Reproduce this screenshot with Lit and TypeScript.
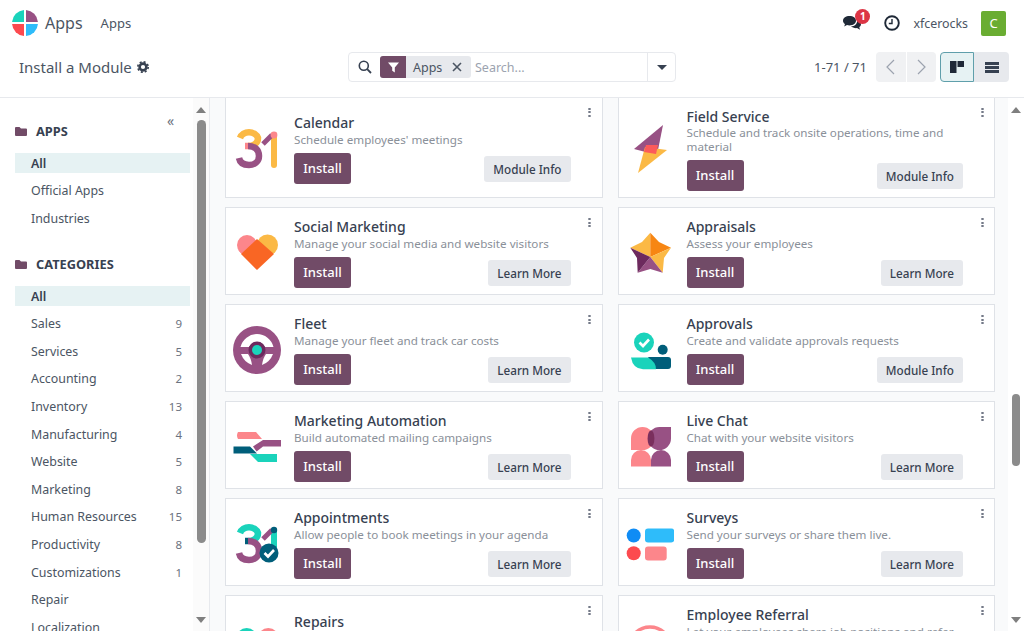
import { LitElement, html, css, svg } from 'lit';
import { customElement } from 'lit/decorators.js';

const PURPLE = "#985184", TEAL = "#1ad3bb", NAVY = "#005e7a", PINK = "#fc868b", AMBER = "#fbb945";

const icons: Record<string, unknown> = {
  calendar: svg`
    <path d="M7 13 A9.5 8.5 0 0 1 25 13 C25 18 21 21 15 21" fill="none" stroke=${AMBER} stroke-width="6.5"/>
    <path d="M15 21 C22 21 26 25 26 31 C26 37 21 40 16 40 C11 40 7 38 6 33" fill="none" stroke=${PURPLE} stroke-width="6.5"/>
    <path d="M15 21 H12" stroke=${PINK} stroke-width="6.5"/>
    <path d="M41 10 V40" stroke=${AMBER} stroke-width="6" stroke-linecap="round"/>
    <path d="M30 19 L39 10" stroke=${PURPLE} stroke-width="5"/>
    <circle cx="41" cy="10" r="3.4" fill=${PINK}/>`,
  service: svg`
    <path d="M37 0 L8 24 L31 30Z" fill=${PURPLE}/>
    <path d="M41 25 L12 48 L19 22Z" fill=${AMBER}/>
    <path d="M20 20 L32 20 L30 29 L18 27Z" fill="#fc5a5a"/>`,
  social: svg`
    <circle cx="14" cy="16" r="10" fill=${PINK}/>
    <circle cx="34.5" cy="16" r="10.5" fill=${AMBER}/>
    <path d="M5 21 L24 41 L15 25Z" fill=${PINK}/>
    <path d="M24 10 L41 25 L24 41 L8 25Z" fill="#f96624"/>`,
  appraisals: svg`
    <path d="M24.3 3.7 L16 13 L4.3 18.7 L24.3 28Z" fill=${AMBER}/>
    <path d="M24.3 3.7 L33 13 L45 18.7 L24.3 28Z" fill="#f78613"/>
    <path d="M45 18.7 L38 29 L36.7 43.7 L24.3 28Z" fill=${AMBER}/>
    <path d="M36.7 43.7 L24.3 40 L11.7 43.7 L24.3 28Z" fill=${PURPLE}/>
    <path d="M11.7 43.7 L11 29 L4.3 18.7 L24.3 28Z" fill="#6d2a5e"/>`,
  fleet: svg`
    <circle cx="24" cy="24" r="24" fill=${PURPLE}/>
    <path d="M7.5 21 A17 17 0 0 1 40.5 21 L32 21 A9 9 0 0 0 16 21Z" fill="#fff"/>
    <path d="M8 28 L15 28 Q18 32 19 39 Q11 36 8 28Z" fill="#fff"/>
    <path d="M40 28 L33 28 Q30 32 29 39 Q37 36 40 28Z" fill="#fff"/>
    <circle cx="24" cy="24" r="8.5" fill="#6d2a5e"/>
    <circle cx="24" cy="24" r="5" fill=${TEAL}/>`,
  approvals: svg`
    <circle cx="18" cy="16.5" r="10" fill=${TEAL}/>
    <path d="M13.5 16.5 L17 20 L23 13.5" fill="none" stroke="#fff" stroke-width="2.6"/>
    <circle cx="36.7" cy="23.8" r="5" fill=${NAVY}/>
    <path d="M22 31 H42 A3 3 0 0 1 45 34 V40 A3 3 0 0 1 42 43 H28Z" fill=${NAVY}/>
    <path d="M5 31.5 H22 Q30 36 30 43.2 H17 Q7 43 5 31.5Z" fill=${TEAL}/>`,
  automation: svg`
    <path d="M5 9 H23 L29 16 H5 Q3 12.500 5 9Z" fill=${PINK}/>
    <path d="M48.700 17 H30 L20 23.500 L23.600 28.500 L30 23.500 H48.700Z" fill=${PURPLE}/>
    <path d="M.5 23.500 H17 L24 30.500 H.5Z" fill=${NAVY}/>
    <path d="M17 31 H44 V39 H25Z" fill=${TEAL}/>`,
  chat: svg`
    <path d="M5 27 V15.500 A11.500 11.500 0 1 1 16.500 27Z" fill=${PINK}/>
    <path d="M45 4 V15.500 A11.500 11.500 0 0 1 33.500 27 A11.500 11.500 0 0 1 33.500 4Z" fill=${PURPLE}/>
    <ellipse cx="25" cy="15.500" rx="3.400" ry="8" fill="#7a2f5d"/>
    <path d="M5 43.500 V37 A10 10 0 0 1 25 37 V43.500Z" fill=${PINK}/>
    <path d="M25 43.500 V37 A10 10 0 0 1 45 37 V43.500Z" fill=${PURPLE}/>`,
  appointments: svg`
    <path d="M7 13 A9.500 8.500 0 0 1 25 13 C25 18 21 21 15 21" fill="none" stroke=${TEAL} stroke-width="6.500"/>
    <path d="M15 21 C22 21 26 25 26 31 C26 37 21 40 16 40 C11 40 7 38 6 33" fill="none" stroke=${PURPLE} stroke-width="6.500"/>
    <path d="M15 21 H12" stroke=${NAVY} stroke-width="6.500"/>
    <path d="M41 10 V30" stroke=${TEAL} stroke-width="6"/>
    <path d="M30 19 L39 10" stroke=${PURPLE} stroke-width="5"/>
    <circle cx="41" cy="10" r="3.200" fill=${NAVY}/>
    <circle cx="36" cy="33" r="9.500" fill=${NAVY}/>
    <path d="M31.500 33 L35 36.500 L41 30" fill="none" stroke="#fff" stroke-width="2.600"/>`,
  surveys: svg`
    <circle cx="7.700" cy="15.500" r="7" fill="#0f8cf5"/>
    <rect x="19" y="8.500" width="29.300" height="14" rx="3" fill="#2ebcfa"/>
    <circle cx="7.700" cy="33.200" r="7" fill="#fc4a4f"/>
    <rect x="19" y="26.500" width="21.700" height="14" rx="3" fill=${PINK}/>`,
  repairs: svg`
    <circle cx="13.700" cy="14.500" r="10.500" fill=${TEAL}/>
    <circle cx="35.300" cy="14.500" r="10.500" fill=${PINK}/>`,
  referral: svg`
    <circle cx="24" cy="24" r="21" fill="none" stroke=${PINK} stroke-width="3.500"/>
    <circle cx="24" cy="24" r="13" fill="none" stroke=${PINK} stroke-width="3.500"/>`,
};

const cards = [
  { icon: "calendar", name: "Calendar", desc: "Schedule employees' meetings", more: "Module Info" },
  { icon: "service", name: "Field Service", desc: "Schedule and track onsite operations, time and material", more: "Module Info" },
  { icon: "social", name: "Social Marketing", desc: "Manage your social media and website visitors", more: "Learn More" },
  { icon: "appraisals", name: "Appraisals", desc: "Assess your employees", more: "Learn More" },
  { icon: "fleet", name: "Fleet", desc: "Manage your fleet and track car costs", more: "Learn More" },
  { icon: "approvals", name: "Approvals", desc: "Create and validate approvals requests", more: "Module Info" },
  { icon: "automation", name: "Marketing Automation", desc: "Build automated mailing campaigns", more: "Learn More" },
  { icon: "chat", name: "Live Chat", desc: "Chat with your website visitors", more: "Learn More" },
  { icon: "appointments", name: "Appointments", desc: "Allow people to book meetings in your agenda", more: "Learn More" },
  { icon: "surveys", name: "Surveys", desc: "Send your surveys or share them live.", more: "Learn More" },
  { icon: "repairs", name: "Repairs", desc: "Repair damaged products", more: "Learn More" },
  { icon: "referral", name: "Employee Referral", desc: "Let your employees share job positions and refer their friends", more: "Learn More" },
];

const categories: [string, number?][] = [
  ["Sales", 9], ["Services", 5], ["Accounting", 2], ["Inventory", 13], ["Manufacturing", 4], ["Website", 5],
  ["Marketing", 8], ["Human Resources", 15], ["Productivity", 8], ["Customizations", 1], ["Repair"], ["Localization"],
];

const folder = html`<svg class="folder" width="12" height="11" viewBox="0 0 12 11">
  <path fill="#714b67" d="M0 2 a1 1 0 0 1 1-1 h3.500 l1.500 1.500 h5 a1 1 0 0 1 1 1 v5.500 a1 1 0 0 1-1 1 h-10 a1 1 0 0 1-1-1z"/>
</svg>`;

@customElement('app-root')
export class AppRoot extends LitElement {
  static styles = css`
    :host{
      display:block;
      font-family:"Noto Sans","Open Sans",sans-serif;
      color:#374151;
    }
    .page{ display:flex; flex-direction:column; height:631px; overflow:hidden; background:#fff; }

    .navbar{ display:flex; align-items:center; height:46px; flex:none; padding-left:12px; padding-right:18px; }
    .brand{ font-size:16px; margin-left:7px; color:#4b5563; }
    .menu{ font-size:13px; margin-left:18px; color:#4b5563; }
    .nav-right{ margin-left:auto; display:flex; align-items:center; }
    .chat{ position:relative; display:flex; margin-right:23px; }
    .badge{
      position:absolute; top:-7px; left:12px;
      width:15px; height:15px; border-radius:50%;
      background:#dc3545; color:#fff;
      font-size:10px; font-weight:700; line-height:15px; text-align:center;
    }
    .user{ font-size:12.4px; margin-left:13px; margin-right:13px; color:#4b5563; }
    .avatar{
      width:25px; height:25px; background:#6aad32; color:#fff; border-radius:2px;
      font-size:13px; line-height:25px; text-align:center;
    }

    .control{ display:flex; align-items:center; height:52px; flex:none; padding:0 15px 9px 19px; border-bottom:1px solid #e7e9ed; box-sizing:border-box; }
    .title{ width:329px; display:flex; align-items:center; gap:5px; font-size:15px; color:#4b5563; }
    .search{
      width:328px; height:30px; box-sizing:border-box;
      display:flex; align-items:center;
      border:1px solid #e7e9ed; border-radius:4px;
    }
    .search-icon{ margin-left:9px; margin-right:8px; flex:none; }
    .facet{ display:flex; height:22px; border-radius:3px; overflow:hidden; background:#e7e9ed; flex:none; }
    .facet-icon{ width:26px; background:#714b67; display:flex; align-items:center; justify-content:center; }
    .facet-label{ width:65px; display:flex; align-items:center; justify-content:space-between; box-sizing:border-box; padding:0 9px 0 7px; font-size:12.5px; color:#4b5563; }
    .placeholder{ margin-left:4px; font-size:12.5px; color:#9ca3af; flex:1; }
    .caret{ width:27px; align-self:stretch; border-left:1px solid #e7e9ed; display:flex; align-items:center; justify-content:center; }
    .caret i{ border-left:5px solid transparent; border-right:5px solid transparent; border-top:5px solid #374151; }

    .pager{ margin-left:auto; display:flex; align-items:center; }
    .count{ font-size:13px; color:#4b5563; margin-right:9px; }
    .pbtn{ width:29.5px; height:30px; background:#f0f1f3; display:flex; align-items:center; justify-content:center; }
    .pbtn.first{ border-radius:4px 0 0 4px; margin-right:1px; }
    .pbtn.last{ border-radius:0 4px 4px 0; margin-right:4px; }
    .view{ width:35px; height:30px; box-sizing:border-box; display:flex; align-items:center; justify-content:center; background:#e7e9ed; border-radius:0 4px 4px 0; }
    .view.active{ width:34px; background:#e6f2f3; border:1px solid #5f9fab; border-radius:4px 0 0 4px; }

    .body{ display:flex; flex:1; min-height:0; }
    .side{ position:relative; display:flex; width:210px; flex:none; box-sizing:border-box; border-right:1px solid #e7e9ed; }
    .side-list{ flex:1; overflow:hidden; padding-top:23px; }
    .collapse{ position:absolute; top:14px; left:167px; font-size:14px; line-height:18px; color:#6b7280; }
    .heading{ display:flex; align-items:center; gap:9px; height:20px; margin:0 0 12px 15px; font-size:12.8px; font-weight:700; color:#374151; }
    .heading.next{ margin-top:26px; }
    .row{
      display:flex; justify-content:space-between; align-items:center;
      height:20px; margin:0 3px 7.6px 15px; padding:0 8px 0 16px;
      font-size:12.4px; color:#4b5563;
    }
    .row.on{ background:#e6f2f3; font-weight:600; color:#374151; }
    .row span + span{ font-size:11.5px; color:#6b7280; }

    .rail{ width:16px; flex:none; display:flex; flex-direction:column; align-items:center; background:#fbfbfb; box-sizing:border-box; padding-top:9px; padding-bottom:8px; }
    .up{ border-left:5.5px solid transparent; border-right:5.5px solid transparent; border-bottom:6px solid #7f7f7f; }
    .down{ border-left:5.5px solid transparent; border-right:5.5px solid transparent; border-top:6px solid #7f7f7f; margin-top:auto; }
    .thumb{ width:9px; background:#8b8b8b; border-radius:5px; }
    .side .thumb{ height:423px; margin-top:7px; }
    .main-rail{ background:#fff; }
    .main-rail .thumb{ width:8px; height:72px; margin-top:281px; }

    .main{ flex:1; min-width:0; overflow:hidden; background:#f9fafb; padding-left:15px; padding-right:12.5px; }
    .grid{ display:grid; grid-template-columns:377.5px 377.5px; gap:9px 15px; margin-top:-1.5px; }

    .card{
      position:relative; box-sizing:border-box; min-height:88.1px;
      display:flex; align-items:center; gap:13px;
      padding:9px 0 6px 7px;
      background:#fff; border:1px solid #dfe2e7;
    }
    .logo{ flex:none; }
    .info{ flex:1; min-width:0; padding-right:31px; }
    .name{ font-size:14px; font-weight:500; line-height:19.5px; color:#374151; }
    .desc{ font-size:11.65px; line-height:13.5px; color:#8a9099; margin-bottom:7px; }
    .actions{ display:flex; align-items:center; justify-content:space-between; }
    .install{ height:31px; width:57px; background:#714b67; color:#fff; border-radius:3px; font-size:13px; font-weight:500; line-height:31px; text-align:center; }
    .more{ height:26px; padding:0 9px; background:#e7e9ed; color:#374151; border-radius:3px; font-size:11.7px; font-weight:500; line-height:26px; }
    .kebab{ position:absolute; top:10px; right:10.5px; width:3px; display:flex; flex-direction:column; gap:1.5px; }
    .kebab i{ width:3px; height:2px; border-radius:50%; background:#6b7280; }
  `;

  renderCard(c: (typeof cards)[number]) {
    return html`
      <div class="card">
        <svg class="logo" width="48" height="48" viewBox="0 0 48 48">${icons[c.icon]}</svg>
        <div class="info">
          <div class="name">${c.name}</div>
          <div class="desc">${c.desc}</div>
          <div class="actions">
            <div class="install">Install</div>
            <div class="more">${c.more}</div>
          </div>
        </div>
        <div class="kebab"><i></i><i></i><i></i></div>
      </div>
    `;
  }

  render() {
    return html`
      <div class="page">
        <div class="navbar">
          <svg width="26" height="26" viewBox="0 0 26 26">
            <path fill="#1ad3bb" d="M12 12 H.04 A13 13 0 0 1 12 .04Z"/>
            <path fill="#985184" d="M14 12 V.04 A13 13 0 0 1 25.96 12Z"/>
            <path fill="#2ebcfa" d="M14 14 H25.96 A13 13 0 0 1 14 25.96Z"/>
            <path fill="#fc4a4f" d="M12 14 V25.96 A13 13 0 0 1 .04 14Z"/>
          </svg>
          <span class="brand">Apps</span>
          <span class="menu">Apps</span>
          <div class="nav-right">
            <div class="chat">
              <svg width="18" height="14" viewBox="0 0 18 14">
                <path fill="#1f2937" d="M6.500 0 C10.200 0 13 2 13 4.700 C13 7.400 10.200 9.400 6.500 9.400 C5.600 9.400 4.800 9.300 4 9 L1.200 10.600 L2 8 C.7 7.200 0 6 0 4.700 C0 2 2.900 0 6.500 0Z"/>
                <path fill="#1f2937" d="M14 4.500 C16.400 5 18 6.500 18 8.300 C18 9.500 17.300 10.500 16.300 11.200 L17 13.800 L14 12.100 C11.500 12.300 9.200 11.600 8 10.300 C11.500 10.300 14.500 8 14 4.500Z"/>
              </svg>
              <span class="badge">1</span>
            </div>
            <svg width="16" height="16" viewBox="0 0 16 16">
              <circle cx="8" cy="8" r="6.800" fill="none" stroke="#1f2937" stroke-width="1.900"/>
              <path d="M8 4 V8.500 H4.800" fill="none" stroke="#1f2937" stroke-width="1.400"/>
            </svg>
            <span class="user">xfcerocks</span>
            <div class="avatar">C</div>
          </div>
        </div>

        <div class="control">
          <div class="title">
            <span>Install a Module</span>
            <svg width="12" height="12" viewBox="0 0 12 12">
              <circle cx="6" cy="6" r="3.400" fill="none" stroke="#374151" stroke-width="2.600"/>
              <circle cx="6" cy="6" r="5.200" fill="none" stroke="#374151" stroke-width="1.600" stroke-dasharray="2.040 2.044"/>
            </svg>
          </div>
          <div class="search">
            <svg class="search-icon" width="14" height="14" viewBox="0 0 14 14">
              <circle cx="5.800" cy="5.800" r="4.500" fill="none" stroke="#374151" stroke-width="1.600"/>
              <path d="M9.200 9.200 L13 13" stroke="#374151" stroke-width="1.800"/>
            </svg>
            <div class="facet">
              <div class="facet-icon">
                <svg width="11" height="11" viewBox="0 0 11 11"><path fill="#fff" d="M0 .5 H11 L6.800 5.500 V10.500 L4.200 8.800 V5.500Z"/></svg>
              </div>
              <div class="facet-label">
                <span>Apps</span>
                <svg width="10" height="10" viewBox="0 0 10 10"><path d="M1 1 L9 9 M9 1 L1 9" stroke="#4b5563" stroke-width="1.600"/></svg>
              </div>
            </div>
            <span class="placeholder">Search...</span>
            <div class="caret"><i></i></div>
          </div>
          <div class="pager">
            <span class="count">1-71 / 71</span>
            <div class="pbtn first"><svg width="9" height="16" viewBox="0 0 9 16"><path d="M8 1 L1 8 L8 15" fill="none" stroke="#9ca3af" stroke-width="1.200"/></svg></div>
            <div class="pbtn last"><svg width="9" height="16" viewBox="0 0 9 16"><path d="M1 1 L8 8 L1 15" fill="none" stroke="#9ca3af" stroke-width="1.200"/></svg></div>
            <div class="view active">
              <svg width="14" height="12" viewBox="0 0 14 12"><path fill="#1f2937" d="M0 0 H6.500 V12 H0Z M7.500 0 H14 V6 H7.500Z"/></svg>
            </div>
            <div class="view">
              <svg width="14" height="11" viewBox="0 0 14 11"><path fill="#374151" d="M0 0 H14 V3 H0Z M0 4 H14 V7 H0Z M0 8 H14 V11 H0Z"/></svg>
            </div>
          </div>
        </div>

        <div class="body">
          <div class="side">
            <div class="side-list">
              <div class="heading">${folder}<span>APPS</span></div>
              <div class="row on"><span>All</span></div>
              <div class="row"><span>Official Apps</span></div>
              <div class="row"><span>Industries</span></div>
              <div class="heading next">${folder}<span>CATEGORIES</span></div>
              <div class="row on"><span>All</span></div>
              ${categories.map(([name, n]) => html`
                <div class="row"><span>${name}</span>${n ? html`<span>${n}</span>` : ""}</div>
              `)}
            </div>
            <span class="collapse">«</span>
            <div class="rail"><i class="up"></i><div class="thumb"></div><i class="down"></i></div>
          </div>
          <div class="main">
            <div class="grid">${cards.map((c) => this.renderCard(c))}</div>
          </div>
          <div class="rail main-rail"><i class="up"></i><div class="thumb"></div><i class="down"></i></div>
        </div>
      </div>
    `;
  }
}
